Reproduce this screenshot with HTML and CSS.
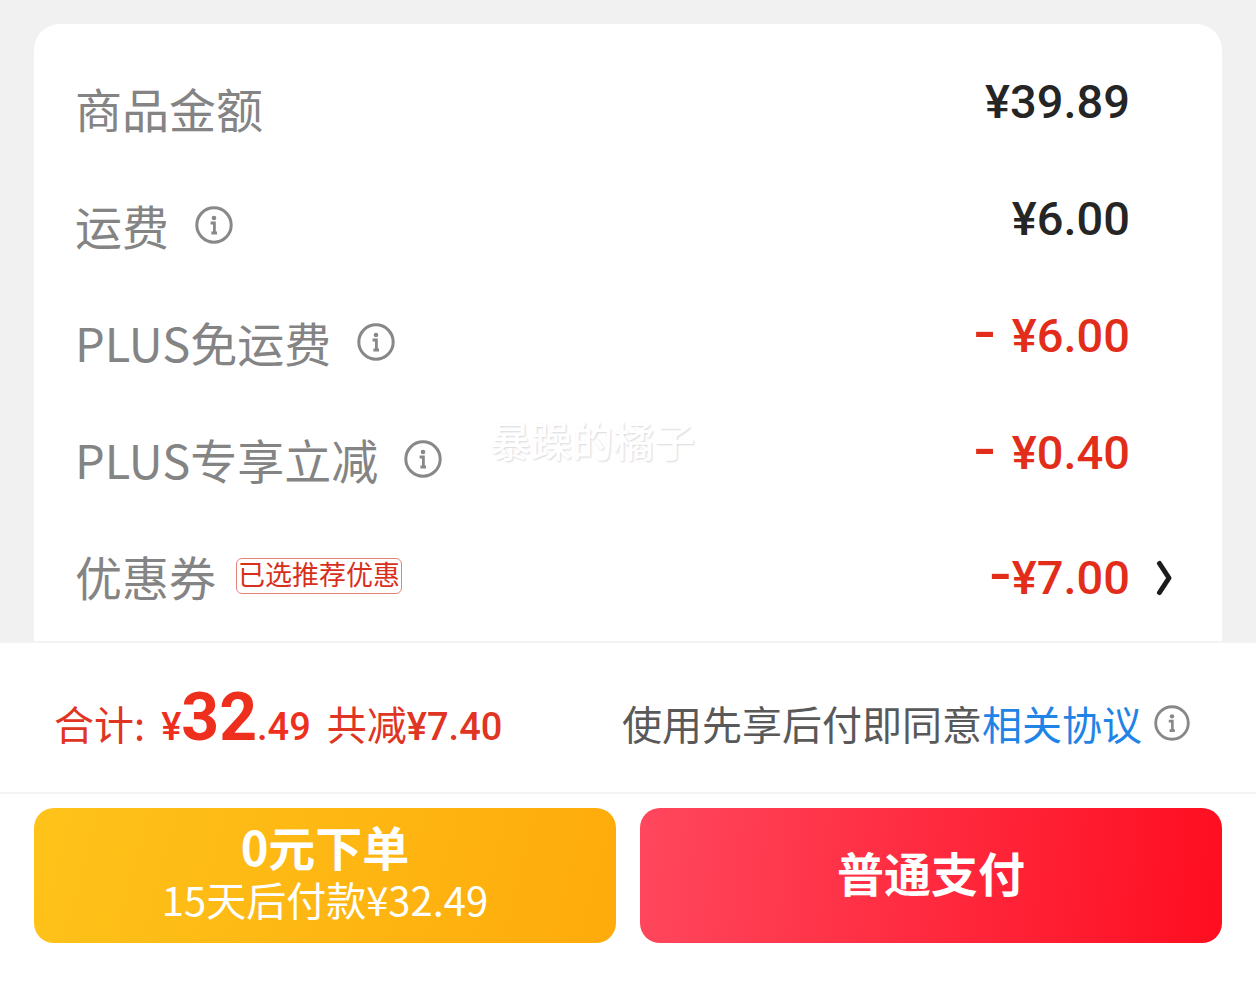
FILE: index.html
```html
<!DOCTYPE html>
<html lang="zh-CN">
<head>
<meta charset="utf-8">
<meta name="viewport" content="width=device-width, initial-scale=1">
<title>订单结算</title>
<link rel="stylesheet" href="styles.css">
</head>
<body>
<svg class="sprite" aria-hidden="true">
  <symbol id="info" viewBox="0 0 38 38">
    <circle cx="19" cy="19" r="17.2" fill="none" stroke="currentColor" stroke-width="3"/>
    <circle cx="19" cy="12" r="2.3" fill="currentColor"/>
    <path d="M15.6 17h3.8v9.6M16.4 27h5.6" fill="none" stroke="currentColor" stroke-width="2.8"/>
  </symbol>
</svg>
<main class="details">
  <section class="card">
    <div class="row">
      <div class="label">商品金额</div>
      <div class="amount">¥39.89</div>
    </div>
    <div class="row">
      <div class="label">运费<button class="info" type="button" aria-label="运费说明"><svg><use href="#info"/></svg></button></div>
      <div class="amount">¥6.00</div>
    </div>
    <div class="row">
      <div class="label">PLUS免运费<button class="info" type="button" aria-label="免运费说明"><svg><use href="#info"/></svg></button></div>
      <div class="amount discount"><span class="minus">-</span> ¥6.00</div>
    </div>
    <div class="row">
      <div class="label">PLUS专享立减<button class="info" type="button" aria-label="立减说明"><svg><use href="#info"/></svg></button></div>
      <div class="amount discount"><span class="minus">-</span> ¥0.40</div>
    </div>
    <div class="row coupon">
      <div class="label">优惠券<span class="tag">已选推荐优惠</span></div>
      <div class="amount discount"><span class="minus">-</span>¥7.00</div>
      <button class="more" type="button" aria-label="选择优惠券"><svg viewBox="0 0 18 36"><path d="M3.5 3.5L13 18L3.5 32.5" fill="none" stroke="currentColor" stroke-width="5" stroke-linecap="round" stroke-linejoin="round"/></svg></button>
    </div>
    <div class="watermark">暴躁的橘子</div>
  </section>
</main>
<footer class="checkout">
  <div class="summary">
    <div class="total">
      <span>合计:</span>
      <span class="price"><span class="small">¥</span><strong>32</strong><span class="small">.49</span></span>
      <span>共减<span class="saved">¥7.40</span></span>
    </div>
    <div class="terms">
      <span>使用先享后付即同意<a href="#terms">相关协议</a></span>
      <button class="info" type="button" aria-label="协议说明"><svg><use href="#info"/></svg></button>
    </div>
  </div>
  <div class="actions">
    <button class="pay later" type="button"><strong>0元下单</strong><span>15天后付款¥32.49</span></button>
    <button class="pay now" type="button"><strong>普通支付</strong></button>
  </div>
</footer>
</body>
</html>
```
FILE: styles.css
```css
* { box-sizing: border-box; }

body {
  margin: 0;
  min-height: 100vh;
  display: flex;
  flex-direction: column;
  background: #fff;
  color: #252525;
  font-family: "Noto Sans CJK SC", sans-serif;
}

button {
  margin: 0;
  padding: 0;
  border: 0;
  background: none;
  color: inherit;
  font: inherit;
  cursor: pointer;
}

.sprite { position: absolute; width: 0; height: 0; }

.details {
  padding: 24px 34px 0;
  background: #f1f1f1;
}

.card {
  position: relative;
  padding: 25px 48px 7px 41px;
  border-radius: 26px 26px 0 0;
  background: #fff;
}

.row {
  display: grid;
  grid-template-columns: 1fr auto 44px;
  align-items: center;
  height: 117px;
}

.label {
  display: flex;
  align-items: center;
  color: #848484;
  font-size: 47px;
  line-height: 60px;
}

.info {
  display: flex;
  margin-left: 26px;
  color: #888;
}

.info svg { width: 38px; height: 38px; }

.amount {
  padding-bottom: 12px;
  font: 500 47px/60px Roboto, sans-serif;
}

.coupon .amount { padding: 4px 0 0; }

.discount { color: #e12d1a; }

.minus {
  margin-right: 4px;
  font-family: "DejaVu Sans", sans-serif;
  font-size: 64px;
  font-weight: 400;
  line-height: 1px;
}

.coupon .minus { margin-right: 0; }

.tag {
  margin-left: 20px;
  padding: 0 1px 4px;
  border: 1px solid #e58276;
  border-radius: 6px;
  color: #d8301c;
  font-size: 27px;
  line-height: 30px;
}

.more { justify-self: end; display: flex; padding-top: 4px; color: #1c1c1c; }

.more svg { width: 18px; height: 36px; }

.watermark {
  position: absolute;
  top: 385px;
  left: 456px;
  color: #fff;
  font-size: 41px;
  font-weight: 500;
  line-height: 60px;
  text-shadow: 1px 1px 2px #d8d8dc;
  pointer-events: none;
}

.checkout { background: #fff; }

.summary {
  display: flex;
  align-items: center;
  justify-content: space-between;
  height: 153px;
  padding: 10px 66px 0 54px;
  border-top: 2px solid #f3f3f3;
  border-bottom: 2px solid #f3f3f3;
  font-size: 40px;
  line-height: 60px;
}

.total {
  display: flex;
  align-items: baseline;
  gap: 16px;
  color: #e03523;
}

.price, .saved { font-family: Roboto, sans-serif; font-size: 38px; font-weight: 500; }

.price { color: #ee2f1d; }

.price strong { font-size: 66px; font-weight: 700; }

.terms { display: flex; align-items: center; color: #595959; }

.terms a { color: #1f84e6; text-decoration: none; }

.terms .info { margin-left: 12px; }

.terms .info svg { width: 36px; height: 36px; }

.actions {
  display: grid;
  grid-template-columns: 1fr 1fr;
  gap: 24px;
  padding: 14px 34px 41px;
}

.pay {
  display: flex;
  flex-direction: column;
  align-items: center;
  justify-content: center;
  height: 135px;
  padding-bottom: 8px;
  border-radius: 20px;
  color: #fff;
  font-size: 40px;
  line-height: 52px;
}

.pay strong { font-size: 47px; font-weight: 700; line-height: 54px; }

.later { background: linear-gradient(105deg, #fec31a, #feab0b); }

.now { background: linear-gradient(95deg, #ff475d, #ff0d20); }
```
